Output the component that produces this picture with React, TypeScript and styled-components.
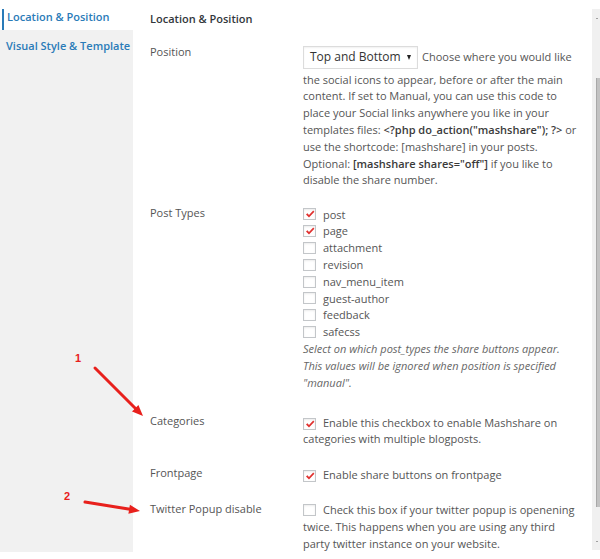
import React from 'react';
import styled, { createGlobalStyle } from 'styled-components';

const GlobalStyle = createGlobalStyle`
  body {
    margin: 0;
    background: #ffffff;
    font-family: 'Open Sans', 'Liberation Sans', sans-serif;
  }
`;

const Page = styled.div`
  position: relative;
  display: flex;
  width: 600px;
  height: 559px;
  overflow: hidden;
  background: #fff;
`;

const Sidebar = styled.nav`
  display: flex;
  flex-direction: column;
  width: 133px;
  height: 552px;
  flex-shrink: 0;
  background: #f1f1f1;
`;

const NavItem = styled.div<{ $active?: boolean }>`
  display: flex;
  align-items: center;
  height: ${(p) => (p.$active ? '30px' : '28px')};
  padding-left: ${(p) => (p.$active ? '7px' : '6px')};
  padding-top: ${(p) => (p.$active ? '2px' : '2px')};
  box-sizing: border-box;
  position: relative;
  background: ${(p) => (p.$active ? '#ffffff' : 'transparent')};
  color: #2a7bb8;
  font-size: 11px;
  font-weight: 600;
  white-space: nowrap;

  &::before {
    content: '';
    display: ${(p) => (p.$active ? 'block' : 'none')};
    position: absolute;
    left: 2px;
    top: 9px;
    bottom: 0;
    width: 2px;
    background: #2a7bb8;
  }
`;

const Main = styled.main`
  flex: 1;
  padding: 10px 0 0 17px;
  color: #4a4a4a;
  font-size: 11px;
  line-height: 16.8px;
`;

const Heading = styled.h2`
  margin: 0;
  font-size: 11px;
  font-weight: 600;
  line-height: 17px;
  color: #32373c;
`;

const Row = styled.div<{ $top: number }>`
  display: grid;
  grid-template-columns: 153px 1fr;
  margin-top: ${(p) => p.$top}px;
`;

const Label = styled.div<{ $shift?: number }>`
  margin-top: ${(p) => p.$shift ?? -1.5}px;
  color: #555;
`;

const Value = styled.div`
  color: #555;
`;

const FirstLine = styled.div`
  display: flex;
  align-items: center;
  height: 24px;
  gap: 4px;
`;

const Select = styled.div`
  display: flex;
  align-items: center;
  justify-content: space-between;
  width: 115px;
  height: 23px;
  box-sizing: border-box;
  padding: 0 6px 0 6px;
  border: 1px solid #dcdcdc;
  box-shadow: inset 0 1px 2px rgba(0, 0, 0, 0.06);
  font-size: 12px;
  color: #333;
`;

const Caret = styled.span`
  width: 0;
  height: 0;
  border-left: 2.5px solid transparent;
  border-right: 2.5px solid transparent;
  border-top: 5px solid #222;
`;

const Paragraph = styled.p<{ $italic?: boolean }>`
  margin: 2.6px 0 0 0;
  font-style: ${(p) => (p.$italic ? 'italic' : 'normal')};
  color: ${(p) => (p.$italic ? '#666' : '#555')};
`;

const Desc = styled.p`
  margin: 0;
  font-style: italic;
  color: #666;
`;

const Strong = styled.b`
  font-weight: 600;
  color: #3a3a3a;
`;

const CheckList = styled.div`
  display: flex;
  flex-direction: column;
`;

const CheckItem = styled.label`
  display: flex;
  align-items: center;
  height: 16.8px;
  gap: 7px;
`;

const Box = styled.span<{ $inline?: boolean }>`
  display: inline-flex;
  align-items: center;
  justify-content: center;
  width: 13px;
  height: 12px;
  box-sizing: border-box;
  border: 1px solid #c3c6c9;
  background: #fff;
  box-shadow: inset 0 1px 2px rgba(0, 0, 0, 0.08);
  vertical-align: ${(p) => (p.$inline ? '-2px' : 'baseline')};
  margin-right: ${(p) => (p.$inline ? '7px' : '0')};
  margin-top: ${(p) => (p.$inline ? '0' : '-1px')};
`;

const Check: React.FC<{ checked?: boolean; inline?: boolean }> = ({ checked, inline }) => (
  <Box $inline={inline}>
    {checked && (
      <svg width="10" height="9" viewBox="0 0 10 9">
        <path d="M1 4.6 L2.4 3.3 L4 5 L8.2 0.6 L9.4 1.8 L4 7.6 Z" fill="#e0312f" />
      </svg>
    )}
  </Box>
);

const Scrollbar = styled.div`
  display: flex;
  flex-direction: column;
  align-items: flex-end;
  width: 8px;
  height: 541px;
  margin-top: 9px;
  flex-shrink: 0;
  background: #f0f0f0;
`;

const ScrollCap = styled.span`
  width: 2px;
  height: 1px;
  margin: 9px 2px 0 0;
  background: #a0a0a0;
`;

const Thumb = styled.div`
  width: 3px;
  height: 429px;
  margin-top: 59px;
  background: #c2c2c2;
  border-left: 1px solid #a8a8a8;
`;

const ScrollFoot = styled.span`
  width: 2px;
  height: 1px;
  margin: auto 2px 8px 0;
  background: #a0a0a0;
`;

const Overlay = styled.div`
  position: absolute;
  inset: 0;
  pointer-events: none;
`;

const Marker = styled.span<{ $x: number; $y: number }>`
  position: absolute;
  left: ${(p) => p.$x}px;
  top: ${(p) => p.$y}px;
  font-family: 'Liberation Sans', Arial, sans-serif;
  font-weight: 700;
  font-size: 11px;
  line-height: 12px;
  color: #e8201c;
`;

const postTypes: [string, boolean][] = [
  ['post', true],
  ['page', true],
  ['attachment', false],
  ['revision', false],
  ['nav_menu_item', false],
  ['guest-author', false],
  ['feedback', false],
  ['safecss', false],
];

export default function App() {
  return (
    <>
      <GlobalStyle />
      <Page>
        <Sidebar>
          <NavItem $active>Location &amp; Position</NavItem>
          <NavItem>Visual Style &amp; Template</NavItem>
        </Sidebar>

        <Main>
          <Heading>Location &amp; Position</Heading>

          <Row $top={18}>
            <Label $shift={-1}>Position</Label>
            <Value>
              <FirstLine>
                <Select>
                  <span>Top and Bottom</span>
                  <Caret />
                </Select>
                <span>Choose where you would like</span>
              </FirstLine>
              <Paragraph>
                the social icons to appear, before or after the main
                <br />
                content. If set to Manual, you can use this code to
                <br />
                place your Social links anywhere you like in your
                <br />
                templates files: <Strong>&lt;?php do_action("mashshare"); ?&gt;</Strong> or
                <br />
                use the shortcode: [mashshare] in your posts.
                <br />
                Optional: <Strong>[mashshare shares="off"]</Strong> if you like to
                <br />
                disable the share number.
              </Paragraph>
            </Value>
          </Row>

          <Row $top={17.4}>
            <Label>Post Types</Label>
            <Value>
              <CheckList>
                {postTypes.map(([name, on]) => (
                  <CheckItem key={name}>
                    <Check checked={on} />
                    {name}
                  </CheckItem>
                ))}
              </CheckList>
              <Desc>
                Select on which post_types the share buttons appear.
                <br />
                This values will be ignored when position is specified
                <br />
                "manual".
              </Desc>
            </Value>
          </Row>

          <Row $top={23.2}>
            <Label>Categories</Label>
            <Value>
              <Check checked inline />
              Enable this checkbox to enable Mashshare on
              <br />
              categories with multiple blogposts.
            </Value>
          </Row>

          <Row $top={18.4}>
            <Label>Frontpage</Label>
            <Value>
              <Check checked inline />
              Enable share buttons on frontpage
            </Value>
          </Row>

          <Row $top={18.9}>
            <Label>Twitter Popup disable</Label>
            <Value>
              <Check inline />
              Check this box if your twitter popup is openening
              <br />
              twice. This happens when you are using any third
              <br />
              party twitter instance on your website.
            </Value>
          </Row>
        </Main>

        <Scrollbar>
          <ScrollCap />
          <Thumb />
          <ScrollFoot />
        </Scrollbar>

        <Overlay>
          <svg width="600" height="559" viewBox="0 0 600 559">
            <line x1="95" y1="368" x2="136" y2="409" stroke="#e8201c" strokeWidth="3" strokeLinecap="round" />
            <polygon points="143,416 132,411.4 138.4,405" fill="#e8201c" />
            <line x1="85" y1="502" x2="130" y2="509.3" stroke="#e8201c" strokeWidth="3" strokeLinecap="round" />
            <polygon points="140,511 128.4,513.7 129.9,504.8" fill="#e8201c" />
          </svg>
          <Marker $x={75} $y={352}>1</Marker>
          <Marker $x={64} $y={490}>2</Marker>
        </Overlay>
      </Page>
    </>
  );
}
